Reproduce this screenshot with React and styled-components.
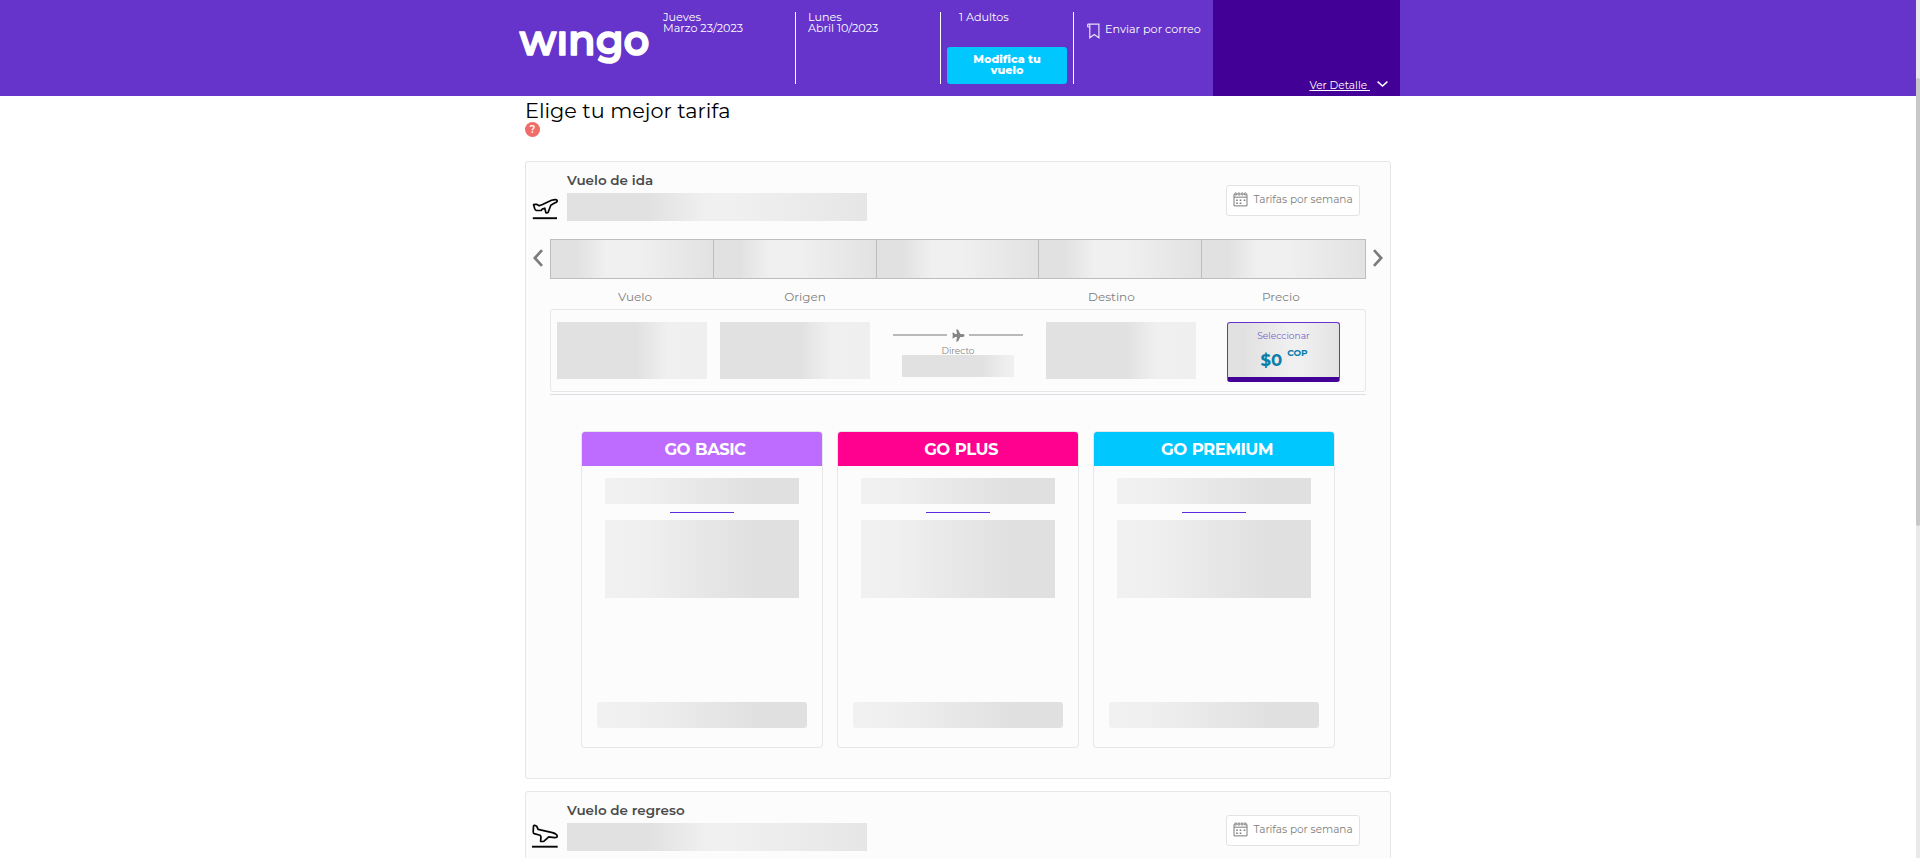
import React from "react";
import styled, { createGlobalStyle, css } from "styled-components";

const Global = createGlobalStyle`
  * { box-sizing: border-box; }
  html, body { margin: 0; height: 100%; overflow: hidden; background: #fff; }
  body { font-family: "Montserrat", "Inter", "Open Sans", sans-serif; color: #000; }
  button { font-family: inherit; margin: 0; cursor: pointer; }
  svg { display: block; flex: none; }
`;

const Page = styled.div`
  height: 858px;
  width: 100%;
  display: flex;
  overflow: hidden;
`;
const Content = styled.div`
  flex: 1;
  min-width: 0;
`;
const ScrollTrack = styled.div`
  width: 4px;
  padding-top: 78px;
  background: #e9e9e9;
`;
const ScrollThumb = styled.div`
  height: 448px;
  background: #c8c8c8;
  border-radius: 2px;
`;

const Header = styled.header`
  height: 96px;
  background: #6633cb;
  color: #fff;
  display: flex;
  padding-left: 519px;
`;
const Logo = styled.svg`
  margin-top: 26px;
  margin-right: 12px;
  overflow: visible;
`;
const Trip = styled.div`
  width: ${(p) => p.$width}px;
  height: 72px;
  margin-top: 12px;
  padding-left: ${(p) => p.$indent || 0}px;
  border-right: 1px solid #fff;
  font-size: 11.2px;
  line-height: 11px;
`;
const Passengers = styled(Trip)`
  display: flex;
  flex-direction: column;
  justify-content: space-between;
  padding: 0 6px;
`;
const Count = styled.span`
  padding-left: 12px;
`;
const ModifyButton = styled.button`
  height: 37px;
  padding: 0 24px 1px;
  border: 0;
  border-radius: 3px;
  background: #00c8ff;
  color: #fff;
  font-size: 11.2px;
  font-weight: 800;
  line-height: 11px;
`;
const Mail = styled.div`
  width: 139px;
  padding: 23px 0 0 13px;
  display: flex;
  gap: 5px;
  font-size: 11.2px;
  line-height: 13px;
  white-space: nowrap;
`;
const Total = styled.div`
  width: 187px;
  background: #420096;
  display: flex;
  justify-content: flex-end;
  align-items: flex-end;
  gap: 7px;
  padding: 0 12px 4px 0;
  font-size: 10.6px;
  line-height: 13px;
`;
const DetailLink = styled.span`
  white-space: pre;
  text-decoration: underline;
  text-underline-offset: 1px;
`;
const ChevronBox = styled.span`
  padding-bottom: 5px;
`;

const Main = styled.main`
  width: 866px;
  margin-left: 525px;
`;
const Title = styled.h1`
  margin: 0;
  padding-top: 3px;
  height: 26px;
  font-size: 20.8px;
  line-height: 24px;
  font-weight: 400;
`;
const Help = styled.div`
  width: 15px;
  height: 15px;
  margin-bottom: 24px;
  border-radius: 50%;
  background: #f16c69;
  color: #fff;
  font-size: 10px;
  line-height: 15px;
  font-weight: 600;
  text-align: center;
`;
const Panel = styled.section`
  height: 618px;
  margin-bottom: 12px;
  border: 1px solid #e6e6e6;
  border-radius: 3px;
  background: #fcfcfc;
`;
const PanelTop = styled.div`
  height: 77px;
  display: flex;
  padding: 0 30px 0 6px;
`;
const PlaneSlot = styled.div`
  padding-top: ${(p) => (p.$landing ? 32 : 36)}px;
  width: 35px;
`;
const Heading = styled.div`
  flex: 1;
`;
const PanelTitle = styled.h2`
  margin: 0;
  height: 31px;
  padding-top: 9px;
  font-size: 13.5px;
  line-height: 18px;
  font-weight: 600;
  color: #4a4a4a;
`;
const WeekButton = styled.button`
  width: 134px;
  height: 31px;
  margin-top: 23px;
  padding: 0 0 3px 6px;
  display: flex;
  align-items: center;
  gap: 5.5px;
  border: 1px solid #e3e3e3;
  border-radius: 3px;
  background: #fff;
  color: #7d7d7d;
  font-size: 10.5px;
  white-space: nowrap;
`;

const gradients = {
  wide: css`linear-gradient(90deg, #e1e1e1 27%, #f0f0f0 47%, #f0f0f0 55%, #e6e6e6 100%)`,
  date: css`linear-gradient(90deg, #e1e1e1 16%, #f0f0f0 34%, #f0f0f0 52%, #e2e2e2 100%)`,
  data: css`linear-gradient(90deg, #e1e1e1 53%, #f0f0f0 74%, #efefef 100%)`,
  short: css`linear-gradient(90deg, #e1e1e1 71%, #eeeeee 92%, #f0f0f0 100%)`,
  price: css`linear-gradient(90deg, #e1e1e1 14%, #f0f0f0 57%, #f0f0f0 66%, #e3e3e3 100%)`,
  fare: css`linear-gradient(90deg, #f1f1f1 0%, #f0f0f0 17%, #e0e0e0 78%)`,
};
const Skeleton = styled.div`
  width: ${(p) => p.$w}px;
  height: ${(p) => p.$h}px;
  flex: none;
  background: ${(p) => gradients[p.$tone]};
  border-radius: ${(p) => p.$round || 0}px;
`;

const DateBar = styled.div`
  display: flex;
  align-items: center;
  padding: 0 7px;
  justify-content: space-between;
  height: 40px;
`;
const ArrowButton = styled.span`
  padding-bottom: 2px;
`;
const Dates = styled.div`
  width: 816px;
  height: 40px;
  display: grid;
  grid-template-columns: repeat(5, 1fr);
  border: 1px solid #bdbdbd;
`;
const DateCell = styled.div`
  background: ${gradients.date};
  border-right: ${(p) => (p.$last ? 0 : 1)}px solid #bdbdbd;
`;

const Inner = styled.div`
  width: 816px;
  margin-left: 24px;
`;
const Labels = styled.div`
  display: grid;
  grid-template-columns: 170px 170px 140px 232px 104px;
  height: 30px;
  padding-top: 9px;
  color: #808080;
  font-size: 12px;
  line-height: 18px;
`;
const Label = styled.span`
  grid-column: ${(p) => p.$col};
  text-align: ${(p) => p.$align || "center"};
  padding-left: ${(p) => p.$pad || 0}px;
`;
const Flight = styled.div`
  height: 83px;
  border: 1px solid #e6e6e6;
  border-radius: 3px;
  display: flex;
  gap: 13px;
  padding: 12px 0 0 6px;
`;
const Route = styled.div`
  width: 150px;
  display: flex;
  flex-direction: column;
  align-items: center;
  color: #858585;
  font-size: 9px;
  line-height: 9px;
`;
const RouteLine = styled.div`
  width: 130px;
  height: 24px;
  padding-top: 2px;
  display: flex;
  align-items: center;
  justify-content: space-between;
`;
const Line = styled.span`
  width: 54px;
  height: 2px;
  background: #b9b9b9;
`;
const Price = styled.button`
  width: 113px;
  height: 60px;
  margin-left: 18px;
  padding: 4px 0 0;
  display: flex;
  flex-direction: column;
  align-items: center;
  border: 1px solid #6633cb;
  border-bottom: 5px solid #420096;
  border-radius: 3px;
  background: ${gradients.price};
  color: #0c7eab;
`;
const Select = styled.span`
  color: #7a5fc8;
  font-size: 9.1px;
  line-height: 17px;
`;
const Amount = styled.span`
  padding: 3px 0 0 1px;
  display: flex;
  gap: 5px;
  font-size: 16.5px;
  line-height: 26px;
  font-weight: 700;
`;
const Currency = styled.span`
  font-size: 9px;
  line-height: 11px;
`;
const Rule = styled.div`
  height: 1px;
  margin-top: 2px;
  background: #dedfe6;
`;

const Fares = styled.div`
  display: flex;
  gap: 14px;
  margin: 36px 0 0 55px;
`;
const Fare = styled.article`
  width: 242px;
  height: 317px;
  border: 1px solid #e6e6e6;
  border-radius: 4px;
  overflow: hidden;
  display: flex;
  flex-direction: column;
  align-items: center;
`;
const FareName = styled.div`
  width: 100%;
  height: 34px;
  padding: 0 0 0 6px;
  background: ${(p) => p.$color};
  color: #fff;
  font-size: 16.5px;
  line-height: 35px;
  font-weight: 700;
  text-align: center;
  letter-spacing: -0.55px;
  word-spacing: 1px;
`;
const FareBody = styled.div`
  flex: 1;
  display: flex;
  flex-direction: column;
  align-items: center;
  padding: 12px 0 19px;
`;
const Accent = styled.div`
  width: 64px;
  height: 1px;
  margin: 8px 0 7px;
  background: #5b2be0;
`;
const Spacer = styled.div`
  flex: 1;
`;

const WingoLogo = () => (
  <Logo width="132" height="44" viewBox="0 0 132 44" aria-label="wingo">
    <text x="0.5" y="28.6" textLength="130" lengthAdjust="spacingAndGlyphs"
      fontFamily="Montserrat" fontSize="42.5" fontWeight="600" fill="#fff" stroke="#fff" strokeWidth="1.4" strokeLinejoin="round">wıngo</text>
  </Logo>
);
const Bookmark = () => (
  <svg width="13" height="16" viewBox="0 0 13 16" fill="none" stroke="#e8e0f7" strokeWidth="1.2">
    <path d="M.7 4V1.8Q.7 1.2 1.4 1.2H11.9V14.8L7.2 11.5 2.8 14.8V2.5Q2.8 1.2 1.5 1.2M.7 4H2.8" />
  </svg>
);
const ChevronDown = () => (
  <svg width="11" height="6" viewBox="0 0 11 6" fill="none" stroke="#fff" strokeWidth="1.5">
    <path d="M.6.6 5.5 5 10.4.6" />
  </svg>
);
const Arrow = ({ right }) => (
  <ArrowButton>
    <svg width="10" height="18" viewBox="0 0 10 18" fill="none" stroke="#7c7c7c" strokeWidth="2.7">
      <path d={right ? "M1 1.2 8.2 9 1 16.8" : "M9 1.2 1.8 9 9 16.8"} />
    </svg>
  </ArrowButton>
);
const TakeOff = () => (
  <svg width="27" height="22" viewBox="0 0 27 22" fill="none" stroke="#050505" strokeWidth="1.7" strokeLinejoin="round" strokeLinecap="round">
    <path d="M1.8 7.2Q1 6.4 2.3 6.4L4.5 6.3 7.2 7.8 10.5 6.5 19.5 2.2Q24.8.8 25.2 2.6 25.4 4.2 22.6 5L18.8 7.2 16.2 14.2Q15.3 15.4 13.9 14.7L12.8 10.2 10.2 11.1 9.4 12.3 4.4 12.5Q3 12 2.6 10.4Z" />
    <path d="M.8 20.2H25" strokeWidth="1.9" strokeLinecap="butt" />
  </svg>
);
const Landing = () => (
  <svg width="27" height="24" viewBox="0 0 27 24" fill="none" stroke="#050505" strokeWidth="1.7" strokeLinejoin="round" strokeLinecap="round">
    <path d="M1.5 2.2Q1.6 1 3 1.4L4.8 2.3 6.1 5.4 20.4 8.6Q25.2 10 25.2 12.2 25.2 13.8 22.4 13.6L16.8 12.9 12 17.2Q10.5 17.7 8.6 17.3L9 12.8 8.1 11.2 2.2 9.6Q1.2 9.2 1.2 7.4Z" />
    <path d="M0 22.7H25.7" strokeWidth="1.9" strokeLinecap="butt" />
  </svg>
);
const Calendar = () => (
  <svg width="15" height="15" viewBox="0 0 15 15" fill="none" stroke="#7b7b7b" strokeWidth="1">
    <path d="M1.6 2.4H1V13.9H14V2.4H13.4M1 5.2H14" />
    <circle cx="2.8" cy="2" r="1.1" /><circle cx="5.9" cy="2" r="1.1" /><circle cx="9.1" cy="2" r="1.1" /><circle cx="12.2" cy="2" r="1.1" />
    <path d="M3.2 8.2H4.8M6.7 8.2H8.3M10.7 8.2H12.3M3.2 11.2H4.8M6.7 11.2H8.3" strokeWidth="1.4" />
  </svg>
);
const Plane = () => (
  <svg width="13" height="13" viewBox="0 0 13 13" fill="#858585">
    <path d="M12.6 6.5Q12.4 7.8 10.8 8H8.3L6 12.6H4.2L5 8H3L1.8 9.3H.4L.8 6.5.4 3.7H1.8L3 5H5L4.2.4H6L8.3 5H10.8Q12.4 5.2 12.6 6.5Z" />
  </svg>
);

const fares = [
  { name: "GO BASIC", color: "#be6cff" },
  { name: "GO PLUS", color: "#ff008f" },
  { name: "GO PREMIUM", color: "#00c8ff" },
];

const TripPanel = ({ title, landing }) => (
  <Panel>
    <PanelTop>
      <PlaneSlot $landing={landing}>{landing ? <Landing /> : <TakeOff />}</PlaneSlot>
      <Heading>
        <PanelTitle>{title}</PanelTitle>
        <Skeleton $w={300} $h={28} $tone="wide" />
      </Heading>
      <WeekButton><Calendar />Tarifas por semana</WeekButton>
    </PanelTop>
    <DateBar>
      <Arrow />
      <Dates>{[0, 1, 2, 3, 4].map((i) => <DateCell key={i} $last={i === 4} />)}</Dates>
      <Arrow right />
    </DateBar>
    <Inner>
      <Labels>
        <Label $col={1}>Vuelo</Label>
        <Label $col={2}>Origen</Label>
        <Label $col={4} $align="left" $pad={58}>Destino</Label>
        <Label $col={5} $align="left">Precio</Label>
      </Labels>
      <Flight>
        <Skeleton $w={150} $h={57} $tone="data" />
        <Skeleton $w={150} $h={57} $tone="data" />
        <Route>
          <RouteLine><Line /><Plane /><Line /></RouteLine>
          Directo
          <Skeleton $w={112} $h={22} $tone="short" />
        </Route>
        <Skeleton $w={150} $h={57} $tone="data" />
        <Price>
          <Select>Seleccionar</Select>
          <Amount>$0 <Currency>COP</Currency></Amount>
        </Price>
      </Flight>
      <Rule />
    </Inner>
    <Fares>
      {fares.map((f) => (
        <Fare key={f.name}>
          <FareName $color={f.color}>{f.name}</FareName>
          <FareBody>
            <Skeleton $w={194} $h={26} $tone="fare" />
            <Accent />
            <Skeleton $w={194} $h={78} $tone="fare" />
            <Spacer />
            <Skeleton $w={210} $h={26} $tone="fare" $round={3} />
          </FareBody>
        </Fare>
      ))}
    </Fares>
  </Panel>
);

export default function App() {
  return (
    <>
      <Global />
      <Page>
        <Content>
          <Header>
            <WingoLogo />
            <Trip $width={133}>Jueves<br />Marzo 23/2023</Trip>
            <Trip $width={145} $indent={12}>Lunes<br />Abril 10/2023</Trip>
            <Passengers $width={133}>
              <Count>1 Adultos</Count>
              <ModifyButton>Modifica tu vuelo</ModifyButton>
            </Passengers>
            <Mail><Bookmark />Enviar por correo</Mail>
            <Total>
              <DetailLink>{"Ver Detalle "}</DetailLink>
              <ChevronBox><ChevronDown /></ChevronBox>
            </Total>
          </Header>
          <Main>
            <Title>Elige tu mejor tarifa</Title>
            <Help>?</Help>
            <TripPanel title="Vuelo de ida" />
            <TripPanel title="Vuelo de regreso" landing />
          </Main>
        </Content>
        <ScrollTrack><ScrollThumb /></ScrollTrack>
      </Page>
    </>
  );
}
